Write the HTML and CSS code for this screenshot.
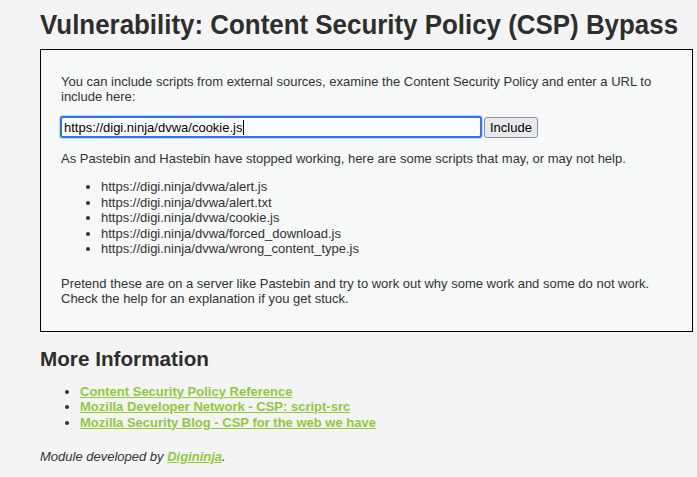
FILE: index.html
```html
<!DOCTYPE html>
<html>
<head>
<meta charset="utf-8">
<link rel="stylesheet" href="styles.css">
</head>
<body>
<div class="main">
  <h1 class="title"><span class="title-text">Vulnerability: Content Security Policy (CSP) Bypass</span></h1>
  <div class="box">
    <form class="form">
      <p class="para">You can include scripts from external sources, examine the Content Security Policy and enter a URL to include here:</p>
      <div class="field-row">
        <input class="url-input" type="text" value="https://digi.ninja/dvwa/cookie.js"><span class="caret"></span>
        <button class="btn" type="button">Include</button>
      </div>
      <p class="para">As Pastebin and Hastebin have stopped working, here are some scripts that may, or may not help.</p>
      <ul class="scripts">
        <li>https://digi.ninja/dvwa/alert.js</li>
        <li>https://digi.ninja/dvwa/alert.txt</li>
        <li>https://digi.ninja/dvwa/cookie.js</li>
        <li>https://digi.ninja/dvwa/forced_download.js</li>
        <li>https://digi.ninja/dvwa/wrong_content_type.js</li>
      </ul>
      <p class="para">Pretend these are on a server like Pastebin and try to work out why some work and some do not work. Check the help for an explanation if you get stuck.</p>
    </form>
  </div>
  <h2 class="subtitle">More Information</h2>
  <ul class="links">
    <li><a href="#">Content Security Policy Reference</a></li>
    <li><a href="#">Mozilla Developer Network - CSP: script-src</a></li>
    <li><a href="#">Mozilla Security Blog - CSP for the web we have</a></li>
  </ul>
  <p class="credit">Module developed by <a href="#">Digininja</a>.</p>
</div>
</body>
</html>
```

FILE: styles.css
```css
html, body {
  margin: 0;
  padding: 0;
}
body {
  background: #f4f4f4;
  font-family: "Liberation Sans", Arial, sans-serif;
  font-size: 13px;
  line-height: 15px;
  color: #333;
}
.main {
  padding: 0 4px 0 40px;
}
.title {
  font-family: "Liberation Sans", Arial, sans-serif;
  font-size: 28px;
  line-height: 32px;
  font-weight: bold;
  color: #2e2e2e;
  margin: 0;
  padding: 9px 0 8px;
  white-space: nowrap;
}
.title-text {
  display: inline-block;
  transform: scaleX(0.925);
  transform-origin: left center;
}
.box {
  border: 1px solid #000;
  background: #f7f8f8;
  padding: 11px 20px 12px;
}
.form {
  margin: 0;
}
.para {
  margin: 13px 0;
}
.field-row {
  display: flex;
  align-items: center;
  height: 22px;
  margin-top: -1px;
  position: relative;
}
.url-input {
  box-sizing: border-box;
  width: 422px;
  height: 22px;
  margin: 0 0 0 -1px;
  padding: 0 2px;
  border: 2px solid #2f74e8;
  border-radius: 3px;
  box-shadow: 0 0 0 1px #b9d4fa;
  outline: none;
  background: #fff;
  font-family: "Liberation Sans", Arial, sans-serif;
  font-size: 13px;
  color: #000;
}
.caret {
  position: absolute;
  left: 182px;
  top: 4px;
  width: 1px;
  height: 15px;
  background: #000;
}
.btn {
  box-sizing: border-box;
  margin-left: 2px;
  height: 21px;
  padding: 0 5px;
  border: 1px solid #8f8f9d;
  border-radius: 3px;
  background: #e9e9ed;
  font-family: "Liberation Sans", Arial, sans-serif;
  font-size: 13px;
  color: #000;
}
.scripts {
  margin: 13px 0 19px;
  padding-left: 40px;
}
.scripts li {
  line-height: 15.5px;
}
.subtitle {
  font-size: 20.7px;
  line-height: 24px;
  font-weight: bold;
  color: #2e2e2e;
  margin: 15px 0 13px;
}
.links {
  margin: 0;
  padding-left: 40px;
}
.links li {
  line-height: 15.5px;
}
a {
  color: #90c93c;
  font-weight: bold;
  text-decoration: underline;
}
.credit {
  font-style: italic;
  margin: 19px 0 0;
}
```
